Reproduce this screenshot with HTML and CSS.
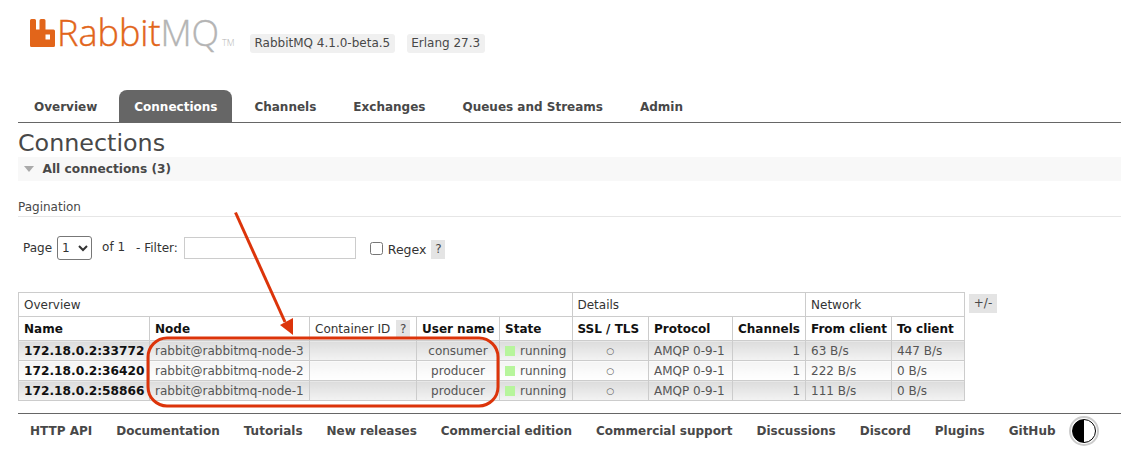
FILE: index.html

```html
<!DOCTYPE html>
<html lang="en">
<head>
  <meta charset="UTF-8">
  <title>RabbitMQ Management</title>
  <link rel="stylesheet" href="styles.css">
</head>
<body>
  <div class="page">
    <div class="header">
      <div class="logo">
        <svg class="logo-mark" width="25" height="28" viewBox="0 0 25 28">
          <path fill="#e2651a" d="M0 1.5Q0 0 1.5 0H4.5Q6 0 6 1.5V10.5H9.5V1.5Q9.5 0 11 0H14Q15.5 0 15.5 1.5V10.5H23.5Q25 10.5 25 12V26.5Q25 28 23.5 28H1.5Q0 28 0 26.5ZM15.5 15.5V20.5H20V15.5Z" fill-rule="evenodd"/>
        </svg>
        <span class="logo-rabbit">Rabbit</span><span class="logo-mq">MQ</span><span class="logo-tm">TM</span>
      </div>
      <span class="version first">RabbitMQ 4.1.0-beta.5</span>
      <span class="version">Erlang 27.3</span>
    </div>

    <ul class="tabs">
      <li>Overview</li>
      <li class="active">Connections</li>
      <li>Channels</li>
      <li>Exchanges</li>
      <li>Queues and Streams</li>
      <li>Admin</li>
    </ul>

    <h1>Connections</h1>
    <div class="section-head"><span class="triangle"></span>All connections (3)</div>

    <h3>Pagination</h3>
    <div class="filter">
      <label>Page</label>
      <select class="page-select"><option>1</option></select>
      <span class="of">of 1</span>
      <label class="filter-label">- Filter:</label>
      <input type="text" class="filter-input">
      <input type="checkbox" class="regex-check">
      <label class="regex-label">Regex</label>
      <span class="help">?</span>
    </div>

    <div class="table-wrap">
      <table>
        <colgroup>
          <col class="c1"><col class="c2"><col class="c3"><col class="c4"><col class="c5">
          <col class="c6"><col class="c7"><col class="c8"><col class="c9"><col class="c10">
        </colgroup>
        <thead>
          <tr class="groups">
            <th colspan="5">Overview</th>
            <th colspan="3">Details</th>
            <th colspan="2">Network</th>
          </tr>
          <tr class="cols">
            <th>Name</th>
            <th>Node</th>
            <th class="light">Container ID <span class="help small">?</span></th>
            <th>User name</th>
            <th>State</th>
            <th>SSL / TLS</th>
            <th>Protocol</th>
            <th>Channels</th>
            <th>From client</th>
            <th>To client</th>
          </tr>
        </thead>
        <tbody>
          <tr class="alt1">
            <td class="name">172.18.0.2:33772</td>
            <td>rabbit@rabbitmq-node-3</td>
            <td></td>
            <td class="center">consumer</td>
            <td><span class="state"></span>running</td>
            <td class="center dot">○</td>
            <td>AMQP 0-9-1</td>
            <td class="right">1</td>
            <td>63 B/s</td>
            <td>447 B/s</td>
          </tr>
          <tr class="alt2">
            <td class="name">172.18.0.2:36420</td>
            <td>rabbit@rabbitmq-node-2</td>
            <td></td>
            <td class="center">producer</td>
            <td><span class="state"></span>running</td>
            <td class="center dot">○</td>
            <td>AMQP 0-9-1</td>
            <td class="right">1</td>
            <td>222 B/s</td>
            <td>0 B/s</td>
          </tr>
          <tr class="alt1">
            <td class="name">172.18.0.2:58866</td>
            <td>rabbit@rabbitmq-node-1</td>
            <td></td>
            <td class="center">producer</td>
            <td><span class="state"></span>running</td>
            <td class="center dot">○</td>
            <td>AMQP 0-9-1</td>
            <td class="right">1</td>
            <td>111 B/s</td>
            <td>0 B/s</td>
          </tr>
        </tbody>
      </table>
      <span class="plus-minus">+/-</span>
    </div>

    <div class="footer">
      <ul class="footer-links">
        <li>HTTP API</li>
        <li>Documentation</li>
        <li>Tutorials</li>
        <li>New releases</li>
        <li>Commercial edition</li>
        <li>Commercial support</li>
        <li>Discussions</li>
        <li>Discord</li>
        <li>Plugins</li>
        <li>GitHub</li>
      </ul>
      <span class="theme-btn"><span class="theme-icon"></span></span>
    </div>
  </div>

  <!-- red annotation drawn on top of the screenshot -->
  <svg class="annotation" width="1121" height="462" viewBox="0 0 1121 462">
    <rect x="148" y="338" width="350" height="68" rx="19" fill="none" stroke="#dc340a" stroke-width="3"/>
    <line x1="235.500" y1="212.500" x2="285" y2="322" stroke="#dc340a" stroke-width="3"/>
    <polygon points="293,335 280,325 293,318" fill="#dc340a"/>
  </svg>
</body>
</html>
```

FILE: styles.css

```css
* {
  box-sizing: border-box;
}
body {
  margin: 0;
  font-family: "DejaVu Sans", Verdana, sans-serif;
  font-size: 12px;
  color: #484848;
  background-color: #fff;
  overflow: hidden;
}
.page {
  padding: 0 0 0 18px;
  width: 1121px;
}
ul {
  list-style: none;
  margin: 0;
  padding: 0;
}

/* header */
.header {
  display: flex;
  align-items: flex-start;
  height: 90px;
}
.logo {
  display: flex;
  align-items: baseline;
  margin: 11px 0 0 12px;
  width: 220px;
  height: 43px;
  font-family: "Open Sans", sans-serif;
  font-weight: 300;
  font-size: 36px;
  line-height: 44px;
  -webkit-text-stroke: 0.4px;
}
.logo-mark {
  align-self: flex-start;
  margin: 8px 2px 0 0;
  flex: none;
}
.logo-rabbit {
  color: #e2651a;
}
.logo-mq {
  color: #b4b4b4;
}
.logo-tm {
  color: #b4b4b4;
  font-size: 9px;
  margin-left: 3px;
  -webkit-text-stroke: 0;
}
.version {
  margin-top: 34px;
  height: 19px;
  line-height: 19px;
  padding: 0 4.500px;
  background-color: #f0f0f0;
  border-radius: 3px;
  color: #484848;
  white-space: nowrap;
}
.version.first {
  margin-right: 12px;
}

/* tabs */
.tabs {
  display: flex;
  height: 33px;
  border-bottom: 1px solid #666;
  font-weight: bold;
  font-size: 12px;
}
.tabs li {
  padding: 1px 15px 0;
  line-height: 33px;
  margin-right: 7px;
  color: #484848;
}
.tabs li:first-child {
  padding-left: 16px;
}
.tabs .active {
  background-color: #666;
  color: #fff;
  border-radius: 8px 8px 0 0;
}

h1 {
  margin: 4px 0 0;
  font-size: 23.800px;
  line-height: 32px;
  font-weight: normal;
  color: #484848;
  height: 30px;
}
.section-head {
  height: 24px;
  line-height: 24px;
  background-color: #f8f8f8;
  font-weight: bold;
  font-size: 12.200px;
  padding-left: 6px;
  display: flex;
  align-items: center;
}
.triangle {
  width: 0;
  height: 0;
  border-left: 5.500px solid transparent;
  border-right: 5.500px solid transparent;
  border-top: 6px solid #aaa;
  margin-right: 8.500px;
}
h3 {
  margin: 16px 0 0;
  height: 20px;
  line-height: 20px;
  font-size: 12px;
  font-weight: normal;
  border-bottom: 1px solid #e6e6e6;
}

/* filter row */
.filter {
  display: flex;
  align-items: center;
  height: 32px;
  margin-top: 15px;
  padding-left: 5px;
  color: #333;
}
.page-select {
  margin: 0 0 0 5px;
  width: 35px;
  height: 24px;
  font-family: "DejaVu Sans", sans-serif;
  font-size: 12px;
  color: #333;
  background-color: #fff;
  border: 1px solid #777;
  border-radius: 3px;
}
.of {
  margin: -2px 0 0 10px;
}
.filter-label {
  margin: 0 6px 0 11px;
}
.filter-input {
  width: 172px;
  height: 22px;
  margin: 0;
  border: 1px solid #ccc;
  background-color: #fff;
}
.regex-check {
  width: 13px;
  height: 13px;
  margin: 0 0 0 14px;
}
.regex-label {
  margin: 3px 5px 0 5px;
  font-size: 12.500px;
}
.help {
  display: inline-block;
  width: 14px;
  height: 19px;
  line-height: 19px;
  margin-top: 2px;
  text-align: center;
  background-color: #e4e4e4;
  color: #484848;
}

/* table */
.table-wrap {
  display: flex;
  align-items: flex-start;
  margin-top: 28px;
}
table {
  border-collapse: collapse;
  table-layout: fixed;
  width: 946px;
  margin: 0;
}
.c1 { width: 131px; }
.c2 { width: 160px; }
.c3 { width: 107px; }
.c4 { width: 83px; }
.c5 { width: 72.500px; }
.c6 { width: 76.500px; }
.c7 { width: 84px; }
.c8 { width: 73px; }
.c9 { width: 86px; }
.c10 { width: 73px; }
th, td {
  border: 1px solid #ccc;
  padding: 0 5px;
  white-space: nowrap;
  overflow: hidden;
}
th {
  text-align: left;
  height: 24px;
  color: #111;
}
.groups th {
  font-weight: normal;
  font-size: 12px;
  color: #333;
}
.cols th {
  font-size: 12px;
  font-weight: bold;
}
.cols th.light {
  font-weight: normal;
  padding-right: 0;
  color: #333;
}
.help.small {
  height: 18px;
  line-height: 18px;
  margin: 0 0 0 2px;
  vertical-align: middle;
}
td {
  height: 20px;
  line-height: 18px;
  color: #555;
  font-size: 12px;
}
.name {
  font-weight: bold;
  color: #111;
  font-size: 12.200px;
  padding-right: 0;
}
.center {
  text-align: center;
}
.right {
  text-align: right;
}
.dot {
  font-size: 9px;
}
.alt1 td {
  background: linear-gradient(#dcdcdc, #f3f3f3);
}
.alt2 td {
  background: linear-gradient(#f4f4f4, #fff);
}
.state {
  display: inline-block;
  width: 10px;
  height: 10px;
  margin-right: 5px;
  background-color: #b7f59c;
  vertical-align: -1px;
}
.plus-minus {
  margin: 2px 0 0 4px;
  width: 28px;
  height: 19px;
  line-height: 19px;
  text-align: center;
  background-color: #e4e4e4;
  color: #484848;
}

/* footer */
.footer {
  display: flex;
  align-items: center;
  height: 34px;
  margin-top: 12px;
  border-top: 1px solid #666;
}
.footer-links {
  display: flex;
  font-weight: bold;
  font-size: 12px;
  padding-left: 12px;
}
.footer-links li {
  margin-right: 24px;
  color: #484848;
  white-space: nowrap;
}
.theme-btn {
  width: 30px;
  height: 30px;
  margin-left: -11px;
  border: 2px solid #ccc;
  border-radius: 50%;
  display: flex;
  align-items: center;
  justify-content: center;
  background-color: #fff;
  flex: none;
}
.theme-icon {
  width: 24px;
  height: 24px;
  border-radius: 50%;
  border: 1px solid #000;
  background: linear-gradient(90deg, #000 50%, #fff 50%);
}

.annotation {
  position: absolute;
  left: 0;
  top: 0;
  pointer-events: none;
}
```
